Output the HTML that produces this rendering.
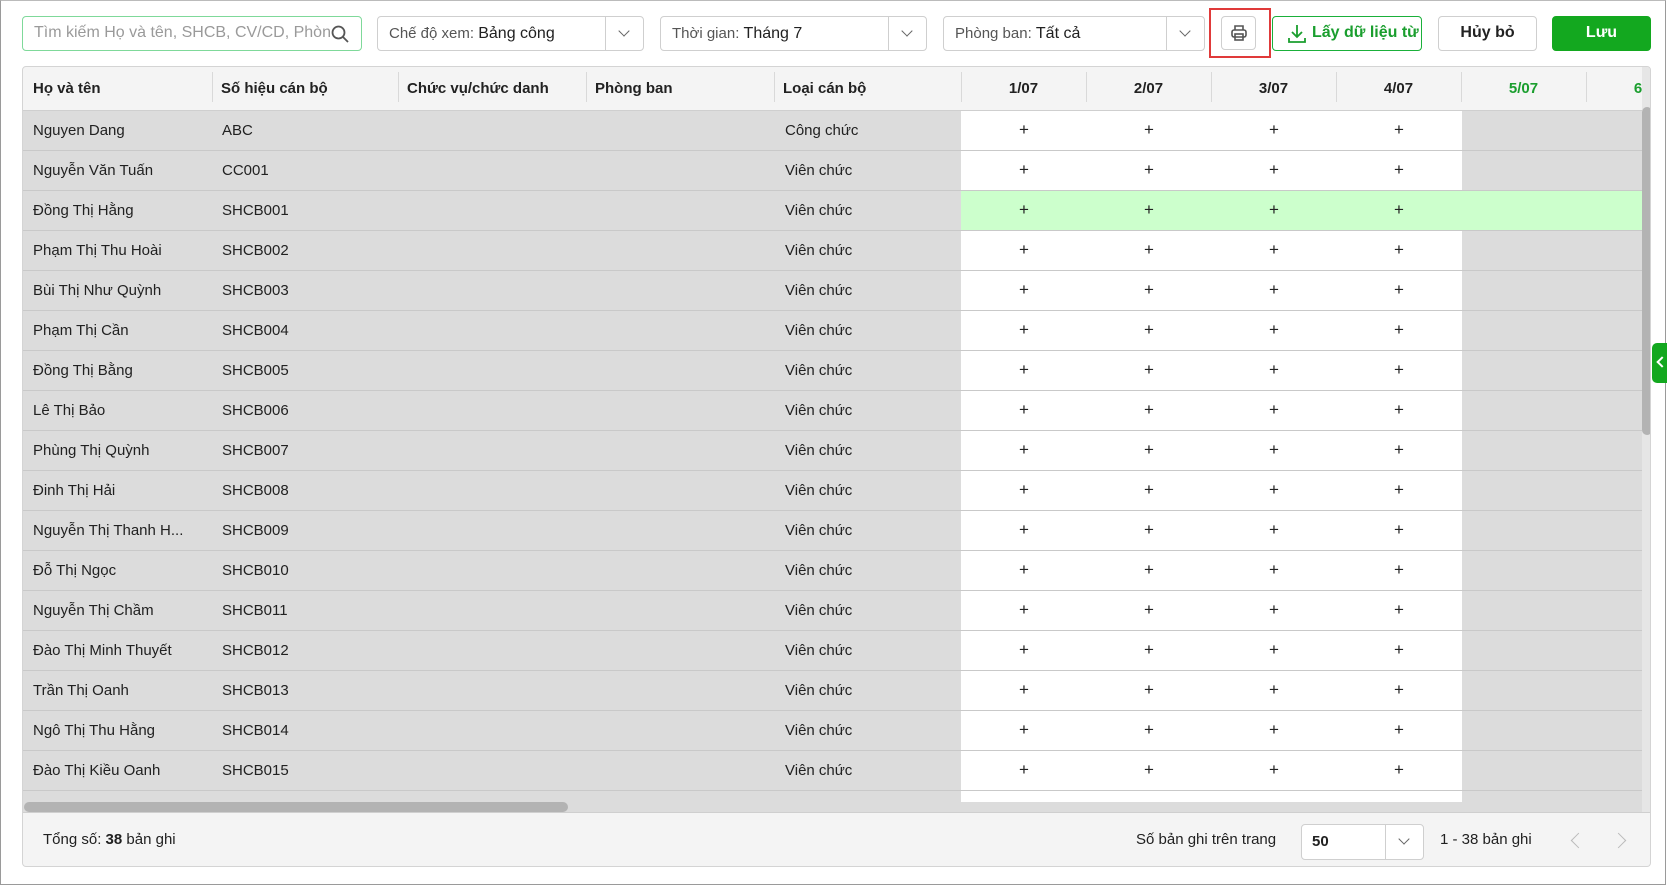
<!DOCTYPE html>
<html><head><meta charset="utf-8"><style>
*{box-sizing:border-box;margin:0;padding:0}
body{width:1667px;height:886px;overflow:hidden;background:#fff;font-family:"Liberation Sans",Arial,sans-serif;font-size:15px;color:#212121;position:relative}
.frame{position:absolute;left:0;top:0;width:1666px;height:885px;border:1px solid #9a9a9a;border-top-color:#bbb}
.box{position:absolute;border:1px solid #cfcfcf;border-radius:4px;background:#fff;height:35px;top:16px}
.lbl{position:absolute;left:11px;top:8px;white-space:nowrap;color:#555;font-size:15px}
.lbl b{color:#212121;font-weight:normal;font-size:16px}
.dd{position:absolute;right:0;top:0;width:38px;height:33px;border-left:1px solid #cfcfcf}
.dd:after{content:"";position:absolute;left:14px;top:10px;width:7px;height:7px;border-right:1.5px solid #666;border-bottom:1.5px solid #666;transform:rotate(45deg)}
.tbl{position:absolute;left:22px;top:66px;width:1629px;height:801px;border:1px solid #d4d4d4;border-radius:4px;overflow:hidden;background:#dcdcdc}
.hdr{position:absolute;left:0;top:0;width:1629px;height:44px;background:#f4f4f4;border-bottom:1px solid #cfcfcf}
.hc{position:absolute;top:0;height:43px;line-height:43px;font-weight:bold;font-size:15px;color:#222;white-space:nowrap}
.hd{width:125px;text-align:center}
.hs{position:absolute;top:5px;width:1px;height:30px;background:#d9d9d9}
.row{position:absolute;left:0;width:1619px;height:40px;border-bottom:1px solid #c9c9c9;background:#dcdcdc}
.row span{position:absolute;top:11px;white-space:nowrap}
.row span:nth-of-type(2){left:199px!important}
.row span:nth-of-type(3){left:762px!important}
.w{position:absolute;left:938px;top:0;width:501px;height:39px;background:#fff}
.g{position:absolute;left:938px;top:0;width:681px;height:39px;background:#ccffcc}
.p{position:absolute;top:9px;font-size:17px;width:20px;text-align:center}
.p:nth-of-type(2){left:991px}
.p:nth-of-type(3){left:1116px}
.p:nth-of-type(4){left:1241px}
.p:nth-of-type(5){left:1366px}
.foot{position:absolute;left:0;top:745px;width:1629px;height:56px;background:#f4f4f4;border-top:1px solid #cfcfcf}
</style></head><body>
<div class="frame"></div>
<div class="box" style="left:22px;width:340px;border-color:#7fd99a"><div class="lbl" style="color:#9a9a9a;font-size:16px;top:7px">Tìm kiếm Họ và tên, SHCB, CV/CD, Phòn</div>
<svg style="position:absolute;right:12px;top:8px" width="18" height="18" viewBox="0 0 18 18"><circle cx="7.5" cy="7.5" r="6" fill="none" stroke="#555" stroke-width="1.8"/><path d="M12 12l5 5" stroke="#555" stroke-width="1.8"/></svg></div>
<div class="box" style="left:377px;width:267px"><div class="lbl">Chế độ xem: <b>Bảng công</b></div><div class="dd"></div></div>
<div class="box" style="left:660px;width:267px"><div class="lbl">Thời gian: <b>Tháng 7</b></div><div class="dd"></div></div>
<div class="box" style="left:943px;width:262px"><div class="lbl">Phòng ban: <b>Tất cả</b></div><div class="dd"></div></div>
<div style="position:absolute;left:1209px;top:8px;width:62px;height:50px;border:2px solid #e03a3a"></div>
<div class="box" style="left:1221px;width:35px;height:34px;top:16px"><svg style="position:absolute;left:8px;top:7px" width="18" height="18" viewBox="0 0 18 18" fill="none" stroke="#555" stroke-width="1.6"><path d="M5 6V2h8v4"/><rect x="2" y="6" width="14" height="7" rx="2"/><rect x="5" y="10" width="8" height="6"/></svg></div>
<div class="box" style="left:1272px;width:150px;border-color:#1ab03a;overflow:hidden"><svg style="position:absolute;left:15px;top:7px" width="18" height="20" viewBox="0 0 18 20" fill="none" stroke="#1a9e2e" stroke-width="1.8"><path d="M9 1v12M4 8l5 5 5-5M1 14v4h16v-4"/></svg><div class="lbl" style="left:39px;top:7px;color:#1a9e2e;font-weight:bold;font-size:16px">Lấy dữ liệu từ ứng</div></div>
<div class="box" style="left:1438px;width:99px"><div class="lbl" style="left:0;width:97px;text-align:center;color:#222;font-weight:bold;font-size:16px;top:7px">Hủy bỏ</div></div>
<div class="box" style="left:1552px;width:99px;background:#13a81f;border-color:#13a81f"><div class="lbl" style="left:0;width:97px;text-align:center;color:#fff;font-weight:bold;font-size:16px;top:7px">Lưu</div></div>

<div class="tbl">
<div class="hdr">
<div class="hc" style="left:10px">Họ và tên</div><div class="hs" style="left:189px"></div>
<div class="hc" style="left:198px">Số hiệu cán bộ</div><div class="hs" style="left:375px"></div>
<div class="hc" style="left:384px">Chức vụ/chức danh</div><div class="hs" style="left:563px"></div>
<div class="hc" style="left:572px">Phòng ban</div><div class="hs" style="left:751px"></div>
<div class="hc" style="left:760px">Loại cán bộ</div><div class="hs" style="left:938px"></div>
<div class="hc hd" style="left:938px">1/07</div><div class="hs" style="left:1063px"></div>
<div class="hc hd" style="left:1063px">2/07</div><div class="hs" style="left:1188px"></div>
<div class="hc hd" style="left:1188px">3/07</div><div class="hs" style="left:1313px"></div>
<div class="hc hd" style="left:1313px">4/07</div><div class="hs" style="left:1438px"></div>
<div class="hc hd" style="left:1438px;color:#1a9e2e">5/07</div><div class="hs" style="left:1563px"></div>
<div class="hc hd" style="left:1563px;color:#1a9e2e">6/07</div>
</div>
<div class="row" style="top:44px"><div class="w"></div><span style="left:10px">Nguyen Dang</span><span>ABC</span><span>Công chức</span><div class="p">+</div><div class="p">+</div><div class="p">+</div><div class="p">+</div></div>
<div class="row" style="top:84px"><div class="w"></div><span style="left:10px">Nguyễn Văn Tuấn</span><span>CC001</span><span>Viên chức</span><div class="p">+</div><div class="p">+</div><div class="p">+</div><div class="p">+</div></div>
<div class="row" style="top:124px"><div class="g"></div><span style="left:10px">Đồng Thị Hằng</span><span>SHCB001</span><span>Viên chức</span><div class="p">+</div><div class="p">+</div><div class="p">+</div><div class="p">+</div></div>
<div class="row" style="top:164px"><div class="w"></div><span style="left:10px">Phạm Thị Thu Hoài</span><span>SHCB002</span><span>Viên chức</span><div class="p">+</div><div class="p">+</div><div class="p">+</div><div class="p">+</div></div>
<div class="row" style="top:204px"><div class="w"></div><span style="left:10px">Bùi Thị Như Quỳnh</span><span>SHCB003</span><span>Viên chức</span><div class="p">+</div><div class="p">+</div><div class="p">+</div><div class="p">+</div></div>
<div class="row" style="top:244px"><div class="w"></div><span style="left:10px">Phạm Thị Cần</span><span>SHCB004</span><span>Viên chức</span><div class="p">+</div><div class="p">+</div><div class="p">+</div><div class="p">+</div></div>
<div class="row" style="top:284px"><div class="w"></div><span style="left:10px">Đồng Thị Bằng</span><span>SHCB005</span><span>Viên chức</span><div class="p">+</div><div class="p">+</div><div class="p">+</div><div class="p">+</div></div>
<div class="row" style="top:324px"><div class="w"></div><span style="left:10px">Lê Thị Bảo</span><span>SHCB006</span><span>Viên chức</span><div class="p">+</div><div class="p">+</div><div class="p">+</div><div class="p">+</div></div>
<div class="row" style="top:364px"><div class="w"></div><span style="left:10px">Phùng Thị Quỳnh</span><span>SHCB007</span><span>Viên chức</span><div class="p">+</div><div class="p">+</div><div class="p">+</div><div class="p">+</div></div>
<div class="row" style="top:404px"><div class="w"></div><span style="left:10px">Đinh Thị Hải</span><span>SHCB008</span><span>Viên chức</span><div class="p">+</div><div class="p">+</div><div class="p">+</div><div class="p">+</div></div>
<div class="row" style="top:444px"><div class="w"></div><span style="left:10px">Nguyễn Thị Thanh H...</span><span>SHCB009</span><span>Viên chức</span><div class="p">+</div><div class="p">+</div><div class="p">+</div><div class="p">+</div></div>
<div class="row" style="top:484px"><div class="w"></div><span style="left:10px">Đỗ Thị Ngọc</span><span>SHCB010</span><span>Viên chức</span><div class="p">+</div><div class="p">+</div><div class="p">+</div><div class="p">+</div></div>
<div class="row" style="top:524px"><div class="w"></div><span style="left:10px">Nguyễn Thị Chầm</span><span>SHCB011</span><span>Viên chức</span><div class="p">+</div><div class="p">+</div><div class="p">+</div><div class="p">+</div></div>
<div class="row" style="top:564px"><div class="w"></div><span style="left:10px">Đào Thị Minh Thuyết</span><span>SHCB012</span><span>Viên chức</span><div class="p">+</div><div class="p">+</div><div class="p">+</div><div class="p">+</div></div>
<div class="row" style="top:604px"><div class="w"></div><span style="left:10px">Trần Thị Oanh</span><span>SHCB013</span><span>Viên chức</span><div class="p">+</div><div class="p">+</div><div class="p">+</div><div class="p">+</div></div>
<div class="row" style="top:644px"><div class="w"></div><span style="left:10px">Ngô Thị Thu Hằng</span><span>SHCB014</span><span>Viên chức</span><div class="p">+</div><div class="p">+</div><div class="p">+</div><div class="p">+</div></div>
<div class="row" style="top:684px"><div class="w"></div><span style="left:10px">Đào Thị Kiều Oanh</span><span>SHCB015</span><span>Viên chức</span><div class="p">+</div><div class="p">+</div><div class="p">+</div><div class="p">+</div></div>
<div class="row" style="top:724px;border:0;height:11px"><div class="w" style="height:11px"></div></div>
<div style="position:absolute;left:0;top:735px;width:1619px;height:10px;background:#dcdcdc"></div>
<div style="position:absolute;left:1px;top:735px;width:544px;height:10px;border-radius:5px;background:#b3b3b3"></div>
<div style="position:absolute;left:1619px;top:0;width:10px;height:745px;background:#e6e6e6"></div>
<div style="position:absolute;left:1619px;top:40px;width:10px;height:328px;border-radius:5px;background:#b3b3b3"></div>
<div class="foot">
<div style="position:absolute;left:20px;top:18px">Tổng số: <b>38</b> bản ghi</div>
<div style="position:absolute;left:1113px;top:18px">Số bản ghi trên trang</div>
<div style="position:absolute;left:1278px;top:11px;width:123px;height:36px;border:1px solid #cfcfcf;border-radius:4px;background:#fff"><span style="position:absolute;left:10px;top:8px;font-weight:bold">50</span><div class="dd" style="height:34px"></div></div>
<div style="position:absolute;left:1417px;top:18px">1 - 38 bản ghi</div>
<div style="position:absolute;left:1550px;top:22px;width:11px;height:11px;border-left:1.5px solid #bbb;border-bottom:1.5px solid #bbb;transform:rotate(45deg)"></div>
<div style="position:absolute;left:1590px;top:22px;width:11px;height:11px;border-right:1.5px solid #bbb;border-top:1.5px solid #bbb;transform:rotate(45deg)"></div>
</div>
</div>
<div style="position:absolute;left:1652px;top:343px;width:15px;height:40px;background:#13a81f;border-radius:5px 0 0 5px"><div style="position:absolute;left:6px;top:15px;width:8px;height:8px;border-left:2px solid #fff;border-bottom:2px solid #fff;transform:rotate(45deg)"></div></div>
</body></html>
